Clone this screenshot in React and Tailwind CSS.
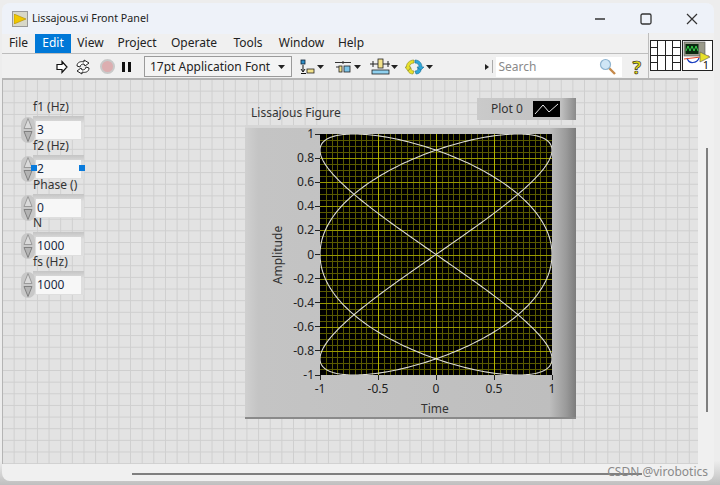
import React from "react";

const menus = [
  { name: "File", w: "w-[33px]" },
  { name: "Edit", w: "w-[36px]", active: true },
  { name: "View", w: "w-[39px]" },
  { name: "Project", w: "w-[54px]" },
  { name: "Operate", w: "w-[60px]" },
  { name: "Tools", w: "w-[48px]" },
  { name: "Window", w: "w-[59px]" },
  { name: "Help", w: "w-[40px]" },
];

const controls = [
  { label: "f1 (Hz)", value: "3" },
  { label: "f2 (Hz)", value: "2", selected: true },
  { label: "Phase ()", value: "0" },
  { label: "N", value: "1000" },
  { label: "fs (Hz)", value: "1000" },
];

const yTicks = ["1", "0.8", "0.6", "0.4", "0.2", "0", "-0.2", "-0.4", "-0.6", "-0.8", "-1"];
const xTicks = ["-1", "-0.5", "0", "0.5", "1"];

const PW = 232;
const PH = 241;

const Arrow = () => (
  <svg width="7" height="4" viewBox="0 0 7 4"><path d="M0 0h7L3.5 4z" fill="#222" /></svg>
);

const Spinner = () => (
  <div className="absolute left-[21px] top-[18px] flex flex-col w-[14px] h-[26px] rounded-full bg-[#c8c8c8] items-center justify-between">
    <svg width="12" height="13" viewBox="0 0 12 13">
      <path d="M6 1.500 L10 11.500 H2 Z" fill="#dadada" stroke="#9a9a9a" />
    </svg>
    <svg width="12" height="13" viewBox="0 0 12 13">
      <path d="M6 11.500 L10 1.500 H2 Z" fill="#b4b4b4" stroke="#808080" />
    </svg>
  </div>
);

const NumericControl = ({ label, value, selected }) => (
  <div className="h-[38.8px] relative">
    <div className="absolute left-[33px] top-[17px] w-[51px] h-[24px] bg-[linear-gradient(#c4c4c4,#dedede_30%,#dedede)]" />
    <Spinner />
    <div className="absolute left-[36px] top-[22px] w-[45px] h-[18px] bg-[#f7f7f7] text-[12px] leading-[18px] pl-[1px] text-[#1a2a44]">{value}</div>
    <div className="absolute left-[33px] top-0 text-[12px] leading-[16px] text-[#333] whitespace-nowrap z-10">{label}</div>
    {selected && (
      <>
        <div className="absolute left-[31px] top-[27px] w-[6px] h-[6px] bg-[#0a7bdc] z-10" />
        <div className="absolute left-[79px] top-[27px] w-[6px] h-[6px] bg-[#0a7bdc] z-10" />
      </>
    )}
  </div>
);

const PlotArea = () => {
  const v = [];
  for (let i = 1; i < 40; i++) v.push(Math.round((i * PW) / 40) + 0.5);
  const h = [];
  for (let i = 1; i < 40; i++) h.push(Math.round((i * PH) / 40) + 0.5);
  const pts = [];
  for (let i = 0; i <= 800; i++) {
    const t = (i / 800) * Math.PI * 2;
    const x = ((Math.sin(3 * t) + 1) / 2) * PW;
    const y = ((1 - Math.sin(2 * t)) / 2) * PH;
    pts.push(x.toFixed(2) + "," + y.toFixed(2));
  }
  return (
    <svg width={PW} height={PH} viewBox={`0 0 ${PW} ${PH}`} className="block bg-black">
      {v.map((x, i) => (i + 1) % 10 !== 0 && (
        <line key={i} x1={x} x2={x} y1="0" y2={PH} stroke="#5a5a00" strokeWidth="1" />
      ))}
      {h.map((y, i) => (i + 1) % 4 !== 0 && (
        <line key={i} y1={y} y2={y} x1="0" x2={PW} stroke="#5a5a00" strokeWidth="1" />
      ))}
      {h.map((y, i) => (i + 1) % 4 === 0 && (
        <line key={i} y1={y} y2={y} x1="0" x2={PW} stroke="#989800" strokeWidth="1" />
      ))}
      {v.map((x, i) => (i + 1) % 10 === 0 && (
        <line key={i} x1={x} x2={x} y1="0" y2={PH} stroke="#b4b400" strokeWidth="1" />
      ))}
      <polyline points={pts.join(" ")} fill="none" stroke="#dcdcd4" strokeWidth="1.100" />
    </svg>
  );
};

const Chart = () => (
  <div className="absolute left-[242px] top-[45px] w-[331px] h-[294px] bg-[linear-gradient(90deg,#d0d0d0_0%,#c4c4c4_4%,#bebebe_92%,#9a9a9a_97%,#7c7c7c_100%)] border-t-[3px] border-[#d6d6d6] border-b-[2px] border-b-[#8a8a8a]">
    <div className="absolute left-[75px] top-[6px]">
      <PlotArea />
    </div>
    {yTicks.map((t, i) => (
      <div
        key={t}
        className="absolute right-[256px] flex items-center gap-[1px] h-[16px] text-[12px] text-[#222]"
        style={{ top: 6 + (i * PH) / 10 - 8 }}
      >
        {t}
        <span className="w-[5px] h-[1px] bg-[#222]" />
      </div>
    ))}
    {xTicks.map((t, i) => (
      <div
        key={t}
        className="absolute flex flex-col items-center w-[40px] text-[12px] leading-[16px] text-[#222]"
        style={{ top: 6 + PH, left: 75 + (i * PW) / 4 - 20 }}
      >
        <span className="w-[1px] h-[5px] bg-[#222] mb-[1px]" />
        {t}
      </div>
    ))}
    <div className="absolute left-[22px] top-[127px] w-[22px] h-[0px] flex items-center justify-center">
      <span className="-rotate-90 text-[12px] text-[#333] whitespace-nowrap">Amplitude</span>
    </div>
    <div className="absolute left-[176px] top-[273px] text-[12px] leading-[16px] text-[#333]">Time</div>
  </div>
);

const Toolbar = () => (
  <div className="h-[25px] flex items-center relative bg-[#f0f0f0] border-t border-[#bdbdbd] pt-[1px]">
    <div className="w-[54px]" />
    <svg width="12" height="14" viewBox="0 0 12 14">
      <path d="M6 1.500 L11 7 L6 12.500 V9.500 H1 V4.500 H6 Z" fill="#fff" stroke="#111" strokeWidth="1.200" />
    </svg>
    <svg width="18" height="16" viewBox="0 0 18 16" className="ml-[6px]">
      <path d="M3 7 C3 3 7 2 10 3 L10 1 L15 4 L11 7 L10 5 C8 5 6 6 6 8 Z" fill="#fff" stroke="#222" />
      <path d="M15 9 C15 13 11 14 8 13 L8 15 L3 12 L7 9 L8 11 C10 11 12 10 12 8 Z" fill="#fff" stroke="#222" />
    </svg>
    <div className="ml-[8px] w-[15px] h-[15px] rounded-full bg-[#dcaeb0] border-2 border-[#c9c9c9]" />
    <div className="ml-[7px] flex gap-[3px]">
      <span className="w-[3px] h-[10px] bg-[#111]" />
      <span className="w-[3px] h-[10px] bg-[#111]" />
    </div>
    <div className="ml-[13px] w-[148px] h-[21px] border border-[#9a9a9a] flex items-center justify-between pl-[5px] pr-[6px] text-[12px] text-[#222] bg-[#f4f4f4] whitespace-nowrap">
      <span>17pt Application Font</span>
      <Arrow />
    </div>
    <svg width="30" height="16" viewBox="0 0 30 16" className="ml-[8px]">
      <rect x="1" y="1" width="4" height="4" fill="#2f8fc8" stroke="#123" strokeWidth=".8" />
      <path d="M3 6v6M1 10l2 3 2-3M1 14.500h5" stroke="#111" fill="none" />
      <rect x="7" y="10" width="7" height="4" fill="#f3e28a" stroke="#222" strokeWidth=".8" />
      <path d="M17 6h7l-3.500 4z" fill="#222" />
    </svg>
    <svg width="30" height="16" viewBox="0 0 30 16" className="ml-[4px]">
      <path d="M1 3.500h16" stroke="#333" />
      <path d="M2 8h3M9 2v3" stroke="#333" />
      <rect x="5" y="7" width="3" height="6" fill="#f3e28a" stroke="#222" strokeWidth=".8" />
      <rect x="10" y="7" width="6" height="6" fill="#7cc4e8" stroke="#222" strokeWidth=".8" />
      <path d="M20 6h7l-3.500 4z" fill="#222" />
    </svg>
    <svg width="30" height="18" viewBox="0 0 30 18" className="ml-[5px]">
      <path d="M1 6h20M4 3v6M19 3v6" stroke="#222" />
      <rect x="9" y="1" width="5" height="9" fill="#f3e28a" stroke="#222" strokeWidth=".8" />
      <rect x="3" y="12" width="17" height="4" fill="#8fd0ee" stroke="#222" strokeWidth=".8" />
      <path d="M22 7h7l-3.500 4z" fill="#222" />
    </svg>
    <svg width="28" height="18" viewBox="0 0 28 18" className="ml-[6px]">
      <path d="M9 2C4 2 1 6 1.500 9L0 9 3 13 6 9 4.500 9C4.500 7 6 5 9 5Z" fill="#e8e02a" stroke="#8a8a20" strokeWidth=".6" />
      <path d="M8 16C4 16 3 13 3 13L6 10C6 12 7 13 9 13Z" fill="#e8e02a" stroke="#8a8a20" strokeWidth=".6" />
      <path d="M10 2C15 2 17 6 17 9L19 9 15 13 12 9 14 9C14 7 13 5 10 5Z" fill="#2fa6d8" stroke="#1c6f96" strokeWidth=".6" />
      <path d="M11 16C14 16 16 14 16 12L13 10C13 12 12 13 10 13Z" fill="#2fa6d8" stroke="#1c6f96" strokeWidth=".6" />
      <path d="M21 7h7l-3.500 4z" fill="#222" />
    </svg>
    <div className="ml-auto flex items-center mr-[73px]">
      <svg width="4" height="6" viewBox="0 0 4 6"><path d="M0 0l4 3-4 3z" fill="#222" /></svg>
      <span className="ml-[3px] w-[1px] h-[13px] bg-[#aaa]" />
      <div className="ml-[3px] w-[126px] h-[20px] bg-white flex items-center justify-between pl-[2px] pr-[6px] text-[12px] text-[#8a8a8a]">
        <span>Search</span>
        <svg width="17" height="17" viewBox="0 0 17 17">
          <path d="M10 10l6 6" stroke="#c68a4a" strokeWidth="2.400" />
          <circle cx="6.500" cy="6.500" r="5" fill="#cfe6f6" stroke="#8fb4d0" strokeWidth="1.200" />
        </svg>
      </div>
      <span className="ml-[10px] text-[18px] leading-[20px] font-bold text-[#e8dc10] [-webkit-text-stroke:0.7px_#333]">?</span>
    </div>
  </div>
);

const ConnectorPane = () => (
  <div className="w-[31px] h-[31px] bg-white border-[1.5px] border-[#222] grid grid-cols-4 grid-rows-2">
    {[0, 1, 2, 3, 4, 5, 6, 7].map((i) => (
      <div key={i} className={`${i % 4 !== 3 ? "border-r" : ""} ${i < 4 ? "border-b" : ""} border-[#222]`}>
        {i % 4 !== 1 && i % 4 !== 2 && <div className="h-[7px] border-b border-[#222]" />}
      </div>
    ))}
  </div>
);

const ViIcon = () => (
  <div className="w-[31px] h-[31px] bg-white border-[1.5px] border-[#222] relative ml-[1px] overflow-hidden">
    <svg width="28" height="28" viewBox="0 0 28 28" className="block">
      <rect x="1" y="1" width="21" height="14" fill="#9a9a8a" stroke="#555" strokeWidth=".6" />
      <rect x="2.500" y="3" width="13" height="10" fill="#0b2a10" />
      <path d="M3 10 L5 5 L7 10 L9 5 L11 10 L13 5 L15 10" stroke="#35d24a" fill="none" strokeWidth="1" />
      <path d="M4 17 C6 24 14 22 16 17" stroke="#1a3fc0" fill="none" strokeWidth="1.200" />
      <path d="M1 18 L26 15" stroke="#e84a2a" strokeWidth="1" />
      <path d="M17 11 L27 16 L17 21 Z" fill="#e8e02a" stroke="#555" strokeWidth=".6" />
    </svg>
    <span className="absolute right-[3px] bottom-[-2px] text-[11px] leading-[14px] text-[#111]">1</span>
  </div>
);

export default function App() {
  return (
    <div className="w-[720px] h-[485px] overflow-hidden bg-[linear-gradient(#ededed_95%,#bfbfbf_100%)] pt-[3px] font-['Noto_Sans','Open_Sans',sans-serif]">
      <div className="ml-[2px] w-[712px] h-[478px] flex flex-col rounded-[8px] bg-[#f0f0f0] overflow-hidden relative">
        {/* title bar */}
        <div className="h-[31px] shrink-0 bg-[#eef2f9] flex items-center pl-[10px]">
          <div className="w-[16px] h-[16px] border border-[#999] bg-[#d8d8c8] flex items-center justify-center">
            <svg width="12" height="10" viewBox="0 0 12 10"><path d="M0 0L12 5L0 10Z" fill="#f0c800" stroke="#b08c00" strokeWidth=".6" /></svg>
          </div>
          <span className="ml-[4px] text-[10.7px] text-[#222]">Lissajous.vi Front Panel</span>
          <div className="ml-auto flex items-center">
            <svg width="12" height="12" viewBox="0 0 12 12" className="mr-[34px]"><path d="M1 6h10" stroke="#333" strokeWidth="1.300" /></svg>
            <svg width="12" height="12" viewBox="0 0 12 12" className="mr-[34px]"><rect x="1" y="1" width="10" height="10" rx="1.500" fill="none" stroke="#333" strokeWidth="1.300" /></svg>
            <svg width="12" height="12" viewBox="0 0 12 12" className="mr-[16px]"><path d="M1 1l10 10M11 1L1 11" stroke="#333" strokeWidth="1.200" /></svg>
          </div>
        </div>
        <div className="h-[44px] shrink-0 relative">
          {/* menu bar */}
          <div className="h-[19px] flex items-center">
            {menus.map((m) => (
              <div
                key={m.name}
                className={`${m.w} h-[19px] text-center text-[12px] leading-[18px] ${m.active ? "bg-[#0078d7] text-white" : "text-[#222]"}`}
              >
                {m.name}
              </div>
            ))}
          </div>
          <Toolbar />
          <div className="absolute left-[646px] top-[-1px] w-[66px] h-[45px] bg-[#f0f0f0] border-l border-[#bdbdbd] flex items-center pl-[1px]">
            <ConnectorPane />
            <ViIcon />
          </div>
        </div>
        {/* front panel */}
        <div className="h-[386px] w-[696px] shrink-0 relative overflow-hidden bg-[#e3e3e3] bg-[linear-gradient(#cfcfcf_1px,transparent_1px),linear-gradient(90deg,#cfcfcf_1px,transparent_1px)] bg-[size:11.65px_11.65px] bg-[position:-1px_-1px] border-l border-t-2 border-[#b4b4b4]">
          <div className="absolute left-[-3px] top-[19px] w-[100px] flex flex-col">
            {controls.map((c) => (
              <NumericControl key={c.label} {...c} />
            ))}
          </div>
          <div className="absolute left-[248px] top-[25px] text-[12px] leading-[16px] text-[#333]">Lissajous Figure</div>
          <div className="absolute left-[474px] top-[18px] w-[99px] h-[22px] bg-[linear-gradient(90deg,#cacaca_0%,#c0c0c0_85%,#8a8a8a_100%)] flex items-center pl-[14px] text-[12px] text-[#333]">
            <span>Plot 0</span>
            <svg width="27" height="16" viewBox="0 0 27 16" className="ml-[10px] bg-black">
              <path d="M2 13 L10 4 L16 11 L25 3" stroke="#e8e8e8" fill="none" strokeWidth="1" />
            </svg>
          </div>
          <Chart />
        </div>
        {/* scrollbars */}
        <div className="absolute left-[704px] top-[145px] w-[2px] h-[264px] bg-[#7f7f7f]" />
        <div className="absolute left-[130px] top-[470px] w-[510px] h-[2px] bg-[#7f7f7f]" />
        <div className="absolute right-[6px] bottom-[1px] text-[12px] leading-[16px] text-[#8a8a8a]">CSDN @virobotics</div>
      </div>
    </div>
  );
}
